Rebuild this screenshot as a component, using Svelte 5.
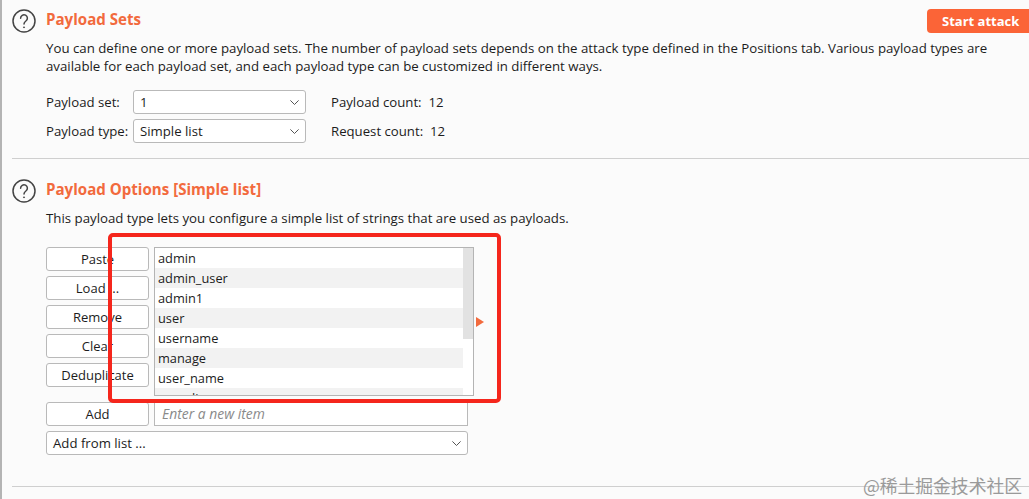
<script>
	const buttons = ['Paste', 'Load ...', 'Remove', 'Clear', 'Deduplicate'];
	const items = ['admin', 'admin_user', 'admin1', 'user', 'username', 'manage', 'user_name', 'manalim'];
</script>

{#snippet help()}
	<svg class="help" width="24" height="24" viewBox="0 0 24 24" fill="none" stroke="#444" stroke-width="1.5">
		<circle cx="12" cy="12" r="11" />
		<path d="M8.6 9.2a3.4 3.4 0 1 1 5.3 2.8c-1.300.9-1.900 1.500-1.900 3.100" stroke-linecap="round" />
		<circle cx="12" cy="18.300" r="0.500" fill="#444" stroke-width="1" />
	</svg>
{/snippet}

{#snippet chevron()}
	<svg class="chevron" width="9" height="5" viewBox="0 0 9 5" fill="none" stroke="#555" stroke-width="1">
		<path d="M0.400 0.400l4.100 4.100 4.100-4.100" />
	</svg>
{/snippet}

<main class="page">
	<section class="sets">
		<div class="head">
			{@render help()}
			<h2>Payload Sets</h2>
			<button class="start">Start attack</button>
		</div>
		<p class="desc two">You can define one or more payload sets. The number of payload sets depends on the attack type defined in the Positions tab. Various payload types are available for each payload set, and each payload type can be customized in different ways.</p>
		<div class="config">
			<span>Payload set:</span>
			<div class="select"><span>1</span>{@render chevron()}</div>
			<span class="count">Payload count:&nbsp; 12</span>
			<span>Payload type:</span>
			<div class="select"><span>Simple list</span>{@render chevron()}</div>
			<span class="count">Request count:&nbsp; 12</span>
		</div>
	</section>

	<section class="options">
		<div class="head">
			{@render help()}
			<h2>Payload Options [Simple list]</h2>
		</div>
		<p class="desc">This payload type lets you configure a simple list of strings that are used as payloads.</p>
		<div class="editor">
			<div class="buttons">
				{#each buttons as label (label)}
					<button class="btn">{label}</button>
				{/each}
			</div>
			<div class="list">
				<div class="rows">
					{#each items as item, i (item)}
						<div class="row" class:alt={i % 2 === 1}>{item}</div>
					{/each}
				</div>
				<div class="track"><div class="thumb"></div></div>
			</div>
			<div class="arrow"></div>
		</div>
		<div class="add">
			<button class="btn">Add</button>
			<div class="input">Enter a new item</div>
		</div>
		<div class="select from"><span>Add from list ...</span>{@render chevron()}</div>
	</section>

	<div class="highlight"></div>
	<div class="watermark">@稀土掘金技术社区</div>
</main>

<style>
	:global(body) {
		margin: 0;
		background: #fbfbfb;
	}
	.page {
		position: relative;
		box-sizing: border-box;
		width: 1029px;
		height: 499px;
		overflow: hidden;
		padding: 9px 0 0 12px;
		border-left: 2px solid #b4b4b4;
		margin: 0;
		font-family: "Open Sans", "Noto Sans", sans-serif;
		font-size: 13.2px;
		color: #1c1c1c;
	}
	.page > section {
		margin-left: -2px;
	}
	.sets {
		height: 149px;
		border-bottom: 1px solid #cfcfcf;
		box-sizing: content-box;
	}
	.options {
		padding-top: 20px;
		height: 307px;
		border-bottom: 1px solid #cfcfcf;
	}
	.head {
		display: flex;
		align-items: flex-start;
		height: 24px;
	}
	.help {
		flex: none;
	}
	h2 {
		margin: 0 0 0 10px;
		font-size: 15.100px;
		line-height: 20px;
		font-weight: 700;
		color: #f26a3d;
	}
	.start {
		margin-left: auto;
		width: 102px;
		height: 24px;
		padding: 0 0 0 15px;
		border: 0;
		border-radius: 4px 0 0 4px;
		background: #fb6437;
		color: #fff;
		font: 700 13px "Open Sans", sans-serif;
		text-align: left;
	}
	.desc {
		margin: 6px 0 0 34px;
		font-size: 13.250px;
		line-height: 18px;
		white-space: nowrap;
	}
	.desc.two {
		width: 950px;
		white-space: normal;
	}
	.config {
		display: grid;
		grid-template-columns: 87px 173px auto;
		grid-auto-rows: 24px;
		row-gap: 5px;
		align-items: center;
		margin: 15px 0 0 34px;
	}
	.count {
		margin-left: 25px;
	}
	.select {
		display: flex;
		align-items: center;
		justify-content: space-between;
		box-sizing: border-box;
		height: 24px;
		padding: 0 6px 0 6px;
		background: #fff;
		border: 1px solid #b9b9b9;
		border-radius: 3px;
	}
	.editor {
		display: flex;
		margin: 20px 0 0 34px;
		height: 149px;
	}
	.buttons {
		display: flex;
		flex-direction: column;
		gap: 5px;
		width: 103px;
	}
	.btn {
		box-sizing: border-box;
		width: 103px;
		height: 24px;
		padding: 0;
		background: #fff;
		border: 1px solid #b9b9b9;
		border-radius: 3px;
		color: #1c1c1c;
		font: 13px "Open Sans", sans-serif;
	}
	.list {
		display: flex;
		box-sizing: border-box;
		width: 320px;
		height: 149px;
		margin-left: 5px;
		overflow: hidden;
		background: #fff;
		border: 1px solid #b4b4b4;
	}
	.rows {
		flex: 1;
		font-size: 12.800px;
	}
	.row {
		height: 20px;
		padding-left: 3px;
		line-height: 20px;
	}
	.row.alt {
		background: #f2f2f2;
	}
	.track {
		width: 10px;
	}
	.thumb {
		height: 91px;
		background: #e2e2e2;
	}
	.arrow {
		align-self: center;
		margin: 1px 0 0 2px;
		border-left: 8px solid #f26a3d;
		border-top: 5px solid transparent;
		border-bottom: 5px solid transparent;
	}
	.add {
		display: flex;
		gap: 5px;
		margin: 6px 0 0 34px;
	}
	.input {
		box-sizing: border-box;
		width: 314px;
		height: 24px;
		padding-left: 7px;
		background: #fff;
		border: 1px solid #b9b9b9;
		line-height: 22px;
		font-size: 13.900px;
		font-style: italic;
		color: #8a8a8a;
	}
	.from {
		width: 422px;
		margin: 5px 0 0 34px;
	}
	.highlight {
		position: absolute;
		left: 106px;
		top: 233px;
		box-sizing: border-box;
		width: 393px;
		height: 170px;
		border: 4px solid #f5261c;
		border-radius: 5px;
	}
	.watermark {
		position: absolute;
		right: 7px;
		top: 472px;
		font-size: 17.800px;
		line-height: 26px;
		color: #9a9a9a;
		font-family: "Noto Sans CJK SC", sans-serif;
	}
</style>
